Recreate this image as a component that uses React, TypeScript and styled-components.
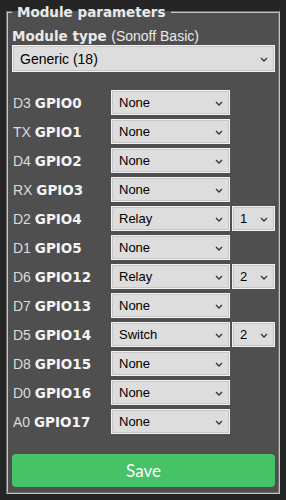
import { Fragment } from "react";
import styled, { createGlobalStyle } from "styled-components";

type Pin = {
  pin: string;
  gpio: string;
  value: string;
  index?: string;
};

const pins: Pin[] = [
  { pin: "D3", gpio: "GPIO0", value: "None" },
  { pin: "TX", gpio: "GPIO1", value: "None" },
  { pin: "D4", gpio: "GPIO2", value: "None" },
  { pin: "RX", gpio: "GPIO3", value: "None" },
  { pin: "D2", gpio: "GPIO4", value: "Relay", index: "1" },
  { pin: "D1", gpio: "GPIO5", value: "None" },
  { pin: "D6", gpio: "GPIO12", value: "Relay", index: "2" },
  { pin: "D7", gpio: "GPIO13", value: "None" },
  { pin: "D5", gpio: "GPIO14", value: "Switch", index: "2" },
  { pin: "D8", gpio: "GPIO15", value: "None" },
  { pin: "D0", gpio: "GPIO16", value: "None" },
  { pin: "A0", gpio: "GPIO17", value: "None" },
];

const GlobalStyle = createGlobalStyle`
  html, body {
    margin: 0;
    padding: 0;
    background: #252525;
  }
`;

const Page = styled.div`
  padding: 4px 6px 6px;
  font-family: "DejaVu Sans", Verdana, sans-serif;
  color: #eaeaea;
`;

const Fieldset = styled.fieldset`
  margin: 0;
  min-width: 0;
  padding: 8px 3px 5px 4px;
  border: 2px groove #c4c4c4;
  background: #4f4f4f;
`;

const Legend = styled.legend`
  padding: 0 5px;
  font-size: 13.5px;
  line-height: 16px;
  font-weight: bold;
  color: #eaeaea;
`;

const TypeLabel = styled.div`
  font-size: 13.5px;
  line-height: 16px;
  font-weight: bold;

  span {
    font-weight: normal;
    font-family: "Liberation Sans", Arial, sans-serif;
    font-size: 14px;
  }
`;

const SelectBox = styled.div<{ $height?: number }>`
  position: relative;
  height: ${(p) => p.$height ?? 25}px;
  box-sizing: border-box;
  border: 1px solid #f2f2f2;
  box-shadow: inset 0 0 0 1px #c6c6c6;
  background: #dddddd;
  color: #000;
  font-family: "Liberation Sans", Arial, sans-serif;
  font-size: 13px;
  display: flex;
  align-items: center;
  padding-left: 7px;
`;

const Chevron = styled.svg`
  position: absolute;
  right: 6px;
  top: 50%;
  margin-top: -2px;
`;

const TypeSelect = styled(SelectBox)`
  margin-top: 1px;
  font-size: 14px;
`;

const Grid = styled.div`
  margin-top: 18px;
  display: grid;
  grid-template-columns: 97px 119px 43px;
  column-gap: 2px;
  row-gap: 4px;
  align-items: center;
`;

const PinLabel = styled.div`
  padding-left: 1px;
  font-family: "Liberation Sans", Arial, sans-serif;
  font-size: 14px;
  color: #dcdcdc;

  b {
    font-family: "DejaVu Sans", Verdana, sans-serif;
    font-size: 13.5px;
    color: #f4f4f4;
  }
`;

const SaveButton = styled.button`
  display: block;
  width: 100%;
  margin-top: 20px;
  height: 33px;
  border: 0;
  border-radius: 4px;
  background: #47c266;
  color: #faffff;
  font-family: Lato, "Open Sans", sans-serif;
  font-size: 17px;
`;

const Select = ({ value, height, as }: { value: string; height?: number; as?: typeof TypeSelect }) => {
  const Box = as ?? SelectBox;
  return (
    <Box $height={height}>
      {value}
      <Chevron width="8" height="5" viewBox="0 0 8 5">
        <polyline points="1,1 4,4 7,1" fill="none" stroke="#333" strokeWidth="1.3" />
      </Chevron>
    </Box>
  );
};

const App = () => {
  return (
    <Page>
      <GlobalStyle />
      <Fieldset>
        <Legend>Module parameters</Legend>
        <TypeLabel>
          Module type <span>(Sonoff Basic)</span>
        </TypeLabel>
        <Select value="Generic (18)" height={27} as={TypeSelect} />
        <Grid>
          {pins.map((p) => (
            <Fragment key={p.gpio}>
              <PinLabel>
                {p.pin} <b>{p.gpio}</b>
              </PinLabel>
              <Select value={p.value} />
              {p.index ? <Select value={p.index} /> : <div />}
            </Fragment>
          ))}
        </Grid>
        <SaveButton>Save</SaveButton>
      </Fieldset>
    </Page>
  );
};

export default App;
